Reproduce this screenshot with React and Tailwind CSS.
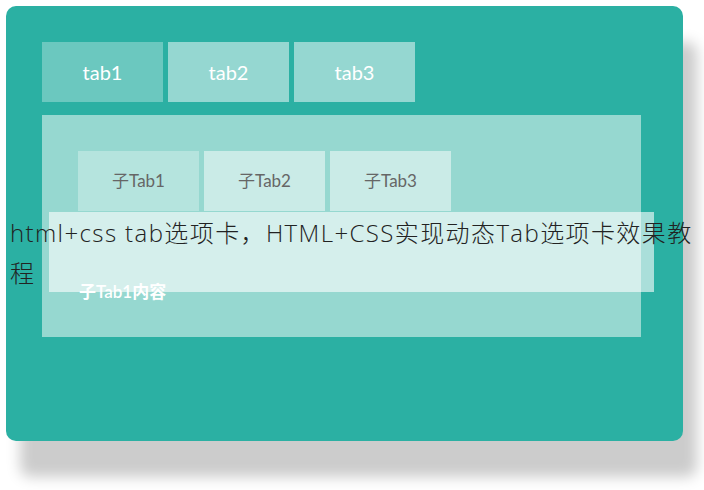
export default function App() {
  return (
    <div className="relative w-[704px] h-[490px] bg-white overflow-hidden font-['Lato','Noto_Sans_CJK_SC',sans-serif]">
      <div className="ml-[6px] mt-[6px] w-[677px] h-[435px] rounded-[10px] bg-[#2bb0a3] shadow-[14px_36px_14px_#cccccc] p-[36px] flex flex-col gap-[13px]">
        <div className="flex gap-[5px]">
          <div className="w-[121px] h-[60px] bg-[#6bc8bf] flex items-center justify-center text-white text-[20px]">tab1</div>
          <div className="w-[121px] h-[60px] bg-[#95d7d1] flex items-center justify-center text-white text-[20px]">tab2</div>
          <div className="w-[121px] h-[60px] bg-[#95d7d1] flex items-center justify-center text-white text-[20px]">tab3</div>
        </div>
        <div className="w-[599px] h-[222px] bg-[#96d8d0] pt-[36px] pl-[36px] flex flex-col">
          <div className="flex gap-[5px]">
            <div className="w-[121px] h-[60px] bg-[#b5e4de] flex items-center justify-center text-[#666] text-[17px]">子Tab1</div>
            <div className="w-[121px] h-[60px] bg-[#caebe7] flex items-center justify-center text-[#666] text-[17px]">子Tab2</div>
            <div className="w-[121px] h-[60px] bg-[#caebe7] flex items-center justify-center text-[#666] text-[17px]">子Tab3</div>
          </div>
          <div className="mt-[70px] pl-[1px] text-white text-[17px] font-semibold leading-[22px]">子Tab1内容</div>
        </div>
      </div>
      <div className="absolute left-[49px] top-[212px] w-[605px] h-[80px] bg-white/60"></div>
      <div className="absolute left-0 top-[213px] w-[704px] px-[10px] text-[24px] leading-[40px] text-[#222] font-light tracking-[1.4px] font-['Open_Sans','Noto_Sans_CJK_SC',sans-serif]">
        html+css tab选项卡，HTML+CSS实现动态Tab选项卡效果教程
      </div>
    </div>
  );
}
